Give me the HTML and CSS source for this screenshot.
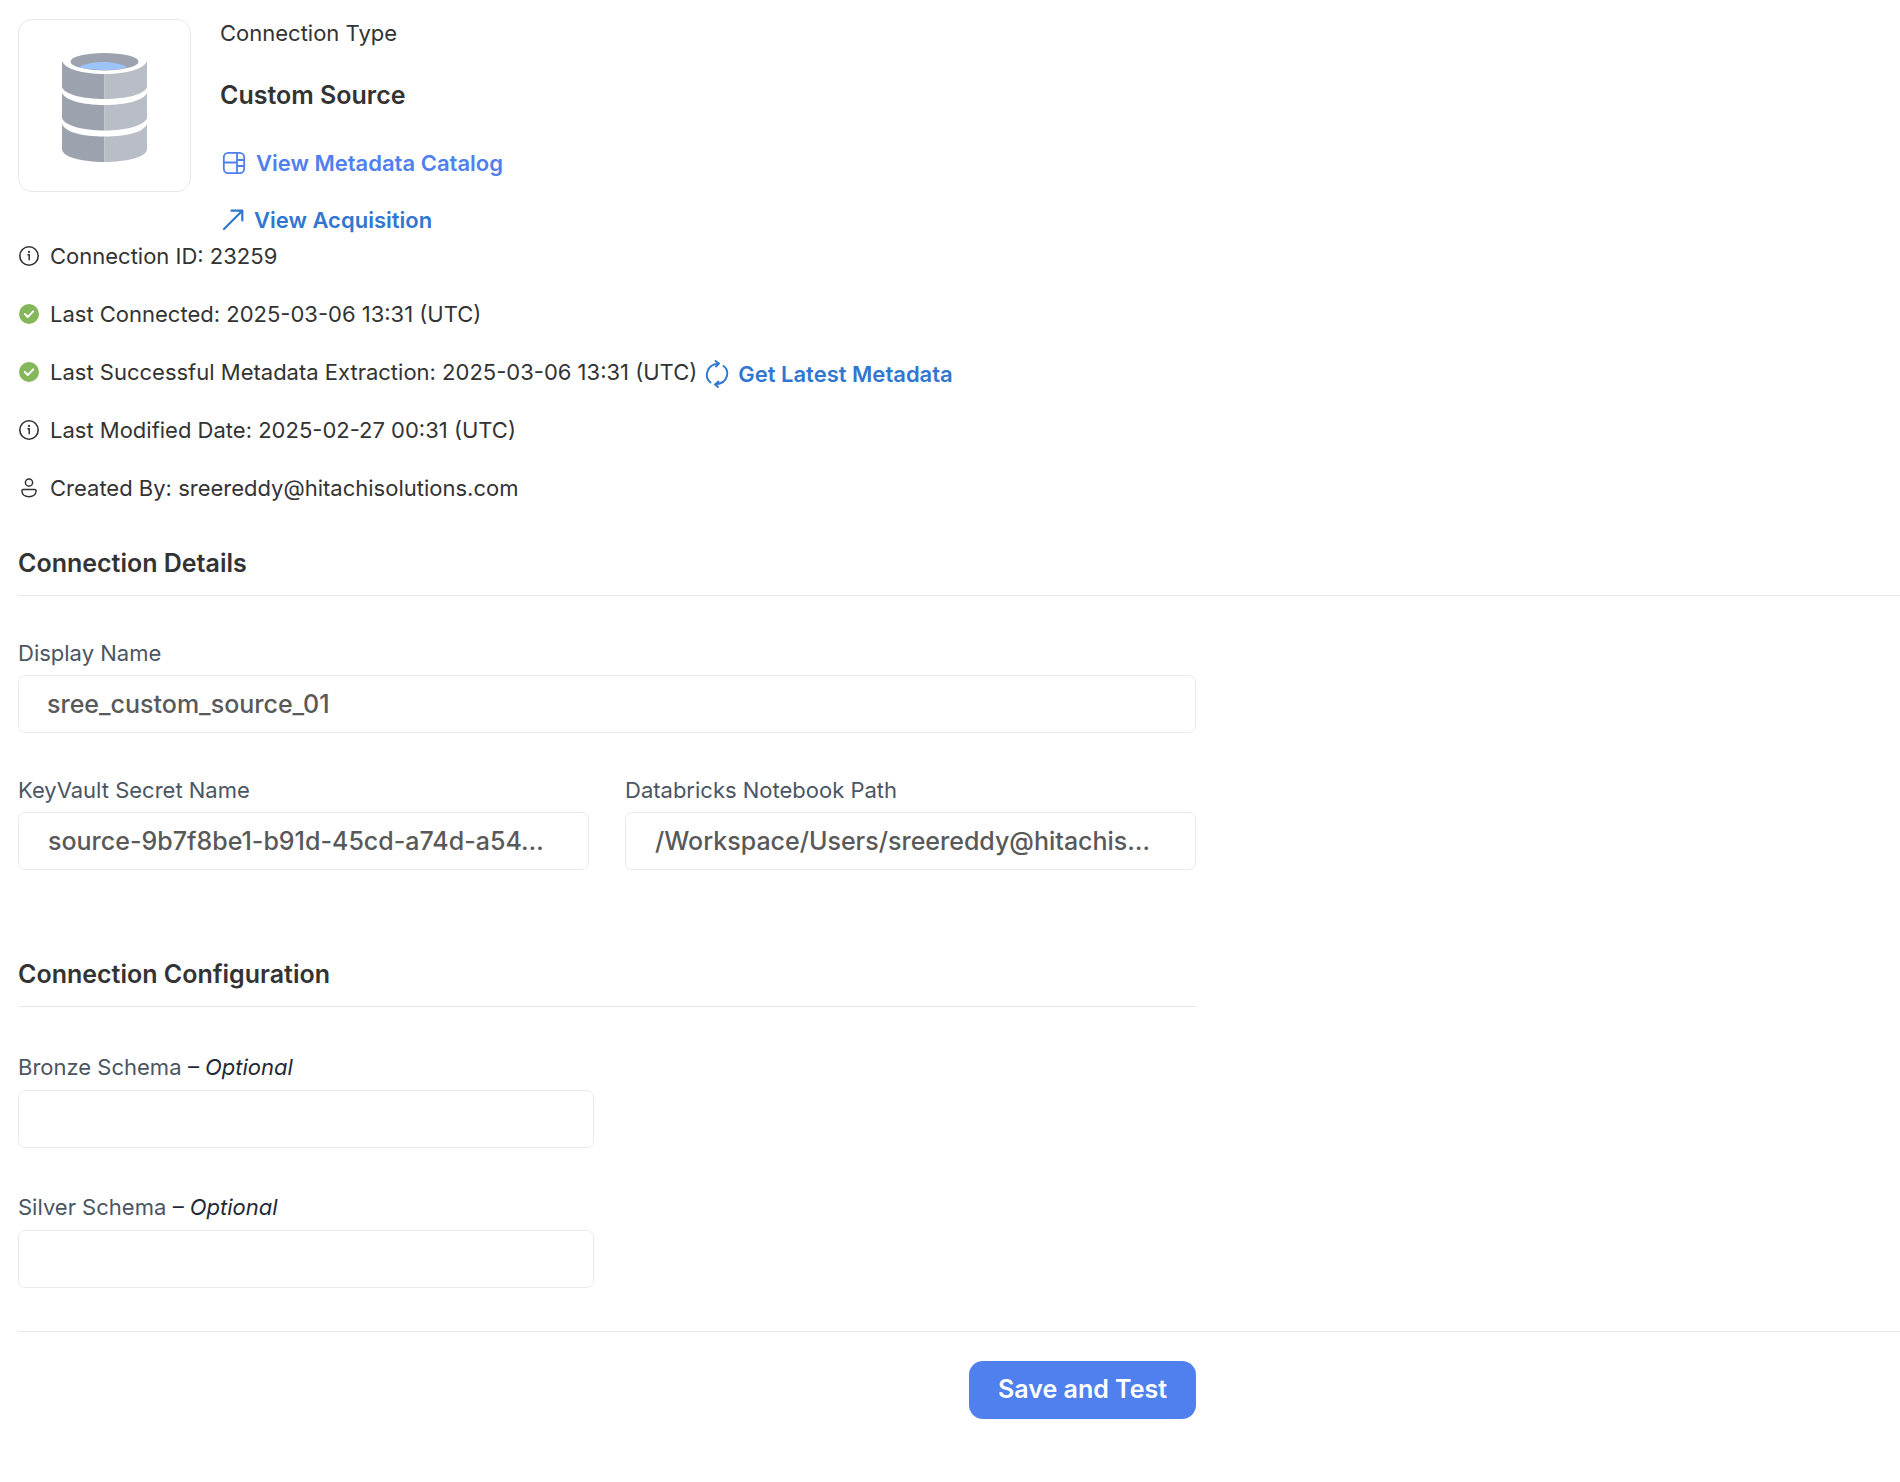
FILE: index.html
```html
<!DOCTYPE html>
<html lang="en">
<head>
<meta charset="utf-8">
<meta name="viewport" content="width=device-width, initial-scale=1">
<title>Custom Source connection</title>
<link rel="stylesheet" href="styles.css">
</head>
<body>
<svg class="sprite" aria-hidden="true">
  <symbol id="info" viewBox="0 0 22 22">
    <circle cx="11" cy="11" r="9.2" fill="none" stroke="currentColor" stroke-width="1.6"/>
    <path d="M9.4 9.7h1.8v5.6" fill="none" stroke="currentColor" stroke-width="1.5"/>
    <circle cx="11" cy="6.9" r="1.1" fill="currentColor"/>
  </symbol>
  <symbol id="check" viewBox="0 0 22 22">
    <circle cx="11" cy="11" r="10" fill="#84b75a"/>
    <path d="M6.800 11l3 3 5.400-5.600" fill="none" stroke="#fff" stroke-width="2" stroke-linecap="round" stroke-linejoin="round"/>
  </symbol>
</svg>
<main class="page">
  <header class="summary">
    <div class="logo">
      <svg class="barrel" viewBox="0 0 85 109" aria-hidden="true">
        <ellipse cx="42.500" cy="8.700" rx="34" ry="8.700" fill="#9ca2ae"/>
        <path d="M17 14C23 10.500 32 9 41 9s19 2 24 5.200C59 16.200 51 17 42 17S24 16.200 17 14z" fill="#9dc4f8"/>
        <path d="M0 8C3 16 20 21 42.500 21V46C20 46 2 41 0 34zM0 40C3 47 20 52 42.500 52V77.500C20 77.500 2 72 0 65zM0 71C3 79 20 83.500 42.500 83.500V109C20 109 0 104 0 96z" fill="#9ca2ae"/>
        <path d="M85 8C82 16 65 21 42.500 21V46C65 46 83 41 85 34zM85 40C82 47 65 52 42.500 52V77.500C65 77.500 83 72 85 65zM85 71C82 79 65 83.500 42.500 83.500V109C65 109 85 104 85 96z" fill="#b8bdc6"/>
      </svg>
    </div>
    <div class="summary-text">
      <p class="type-label">Connection Type</p>
      <h1 class="type-name">Custom Source</h1>
      <a class="link link-catalog" href="#catalog">
        <svg class="icon-link" viewBox="0 0 24 24" fill="none" stroke="currentColor" stroke-width="1.800" aria-hidden="true"><rect x="1.800" y="1.800" width="20.400" height="20.400" rx="4.500"/><path d="M15 2v20M2 11.500h13M15 9h7M15 15h7"/></svg>
        View Metadata Catalog</a>
      <a class="link link-acquisition" href="#acquisition">
        <svg class="icon-link" viewBox="0 0 24 24" fill="none" stroke="currentColor" stroke-width="2.200" stroke-linecap="round" stroke-linejoin="round" aria-hidden="true"><path d="M2 21L20 3M9.500 2.700H20.300V12.500"/></svg>
        View Acquisition</a>
    </div>
  </header>

  <ul class="facts">
    <li class="fact"><svg class="icon"><use href="#info"/></svg>Connection ID: 23259</li>
    <li class="fact"><svg class="icon"><use href="#check"/></svg>Last Connected: 2025-03-06 13:31 (UTC)</li>
    <li class="fact"><svg class="icon"><use href="#check"/></svg>Last Successful Metadata Extraction: 2025-03-06 13:31 (UTC)
      <button class="refresh" type="button">
        <svg class="icon-refresh" viewBox="0 0 28 28" fill="none" stroke="currentColor" stroke-width="1.900" stroke-linecap="round" stroke-linejoin="round" aria-hidden="true"><path d="M7.500 22.500C1.500 17.500 2.500 5 15.500 3.500M12.500 1L16 3.500 13 6.500M20.500 6C26.500 10.500 26 23 12.500 24.500M15.500 21.500L12 24.500 15 27"/></svg>
        Get Latest Metadata</button></li>
    <li class="fact"><svg class="icon"><use href="#info"/></svg>Last Modified Date: 2025-02-27 00:31 (UTC)</li>
    <li class="fact"><svg class="icon" viewBox="0 0 22 22" fill="none" stroke="currentColor" stroke-width="1.500"><circle cx="11" cy="5.500" r="3.600"/><path d="M5.200 12.500h11.600q1.300 0 1.300 1.300C18 17.500 15 19.700 11 19.700S4 17.500 3.900 13.800q0-1.300 1.300-1.300z"/></svg>Created By: sreereddy@hitachisolutions.com</li>
  </ul>

  <form class="form">
    <h2 class="heading">Connection Details</h2>
    <div class="details">
      <div class="field field-wide">
        <label class="label" for="display-name">Display Name</label>
        <input class="input" id="display-name" type="text" value="sree_custom_source_01">
      </div>
      <div class="field">
        <label class="label" for="secret">KeyVault Secret Name</label>
        <input class="input input-select" id="secret" type="text" value="source-9b7f8be1-b91d-45cd-a74d-a54…">
      </div>
      <div class="field">
        <label class="label" for="notebook">Databricks Notebook Path</label>
        <input class="input input-select" id="notebook" type="text" value="/Workspace/Users/sreereddy@hitachis…">
      </div>
    </div>
    <section class="config">
      <h2 class="heading">Connection Configuration</h2>
      <div class="schemas">
        <div class="field">
          <label class="label label-schema" for="bronze">Bronze Schema <em class="optional">– Optional</em></label>
          <input class="input" id="bronze" type="text">
        </div>
        <div class="field">
          <label class="label label-schema" for="silver">Silver Schema <em class="optional">– Optional</em></label>
          <input class="input" id="silver" type="text">
        </div>
      </div>
    </section>
    <footer class="footer">
      <div class="actions"><button class="save" type="submit">Save and Test</button></div>
    </footer>
  </form>
</main>
</body>
</html>
```
FILE: styles.css
```css
* {
  box-sizing: border-box;
}

body {
  margin: 0;
  background: #fff;
  color: #333;
  font-family: Inter, "Liberation Sans", sans-serif;
  font-size: 22px;
  line-height: 28px;
}

p, h1, h2, ul {
  margin: 0;
  padding: 0;
}

.sprite {
  display: none;
}

.page {
  padding: 19px 0 60px 18px;
}

.summary {
  display: flex;
  gap: 29px;
}

.logo {
  display: flex;
  align-items: center;
  justify-content: center;
  width: 173px;
  height: 173px;
  padding-top: 4px;
  border: 1px solid #e5e7eb;
  border-radius: 14px;
}

.barrel {
  width: 85px;
  height: 109px;
}

.summary-text {
  display: flex;
  flex-direction: column;
  align-items: flex-start;
}

.type-name {
  margin: 33px 0 39px;
  font-size: 25px;
  font-weight: 600;
  line-height: 30px;
}

.link {
  display: flex;
  align-items: center;
  font-weight: 600;
  text-decoration: none;
}

.link-catalog {
  gap: 10px;
  margin: 0 0 29px 2px;
  color: #4f80ee;
}

.link-acquisition {
  gap: 8px;
  margin-left: 2px;
  color: #3177d1;
}

.icon-link {
  width: 24px;
  height: 24px;
}

.facts {
  display: flex;
  flex-direction: column;
  gap: 30px;
  margin-top: 8px;
  list-style: none;
}

.fact {
  display: flex;
  align-items: center;
}

.icon {
  width: 22px;
  height: 22px;
  margin-right: 10px;
}

.refresh {
  display: flex;
  align-items: center;
  gap: 7px;
  height: 28px;
  margin-left: 6px;
  padding: 3px 0 0;
  border: 0;
  background: none;
  color: #3177d1;
  font: inherit;
  font-weight: 600;
}

.icon-refresh {
  width: 28px;
  height: 28px;
}

.form {
  margin-top: 46px;
}

.heading {
  padding-bottom: 17px;
  border-bottom: 1px solid #e5e7eb;
  font-size: 25px;
  font-weight: 600;
  line-height: 30px;
}

.details {
  display: grid;
  grid-template-columns: 1fr 1fr;
  gap: 43px 36px;
  max-width: 1178px;
  margin-top: 43px;
}

.field {
  display: flex;
  flex-direction: column;
}

.field-wide {
  grid-column: 1 / -1;
}

.label {
  margin-bottom: 8px;
  color: #4b5563;
}

.label-schema {
  margin-bottom: 9px;
}

.optional {
  color: #1f2937;
}

.input {
  width: 100%;
  height: 58px;
  padding: 0 28px;
  border: 1px solid #ebebeb;
  border-radius: 7px;
  background: #fff;
  color: #595959;
  font: inherit;
  font-size: 25px;
  font-weight: 500;
}

.input-select {
  padding: 0 29px;
}

.config {
  max-width: 1178px;
  margin-top: 89px;
}

.schemas {
  display: flex;
  flex-direction: column;
  gap: 45px;
  max-width: 576px;
  margin-top: 46px;
}

.footer {
  margin-top: 43px;
  border-top: 1px solid #e5e7eb;
}

.actions {
  display: flex;
  justify-content: flex-end;
  max-width: 1178px;
  padding-top: 29px;
}

.save {
  height: 58px;
  padding: 0 29px 2px;
  border: 0;
  border-radius: 14px;
  background: #4f80ee;
  color: #fff;
  font: inherit;
  font-size: 25px;
  font-weight: 600;
}
```
